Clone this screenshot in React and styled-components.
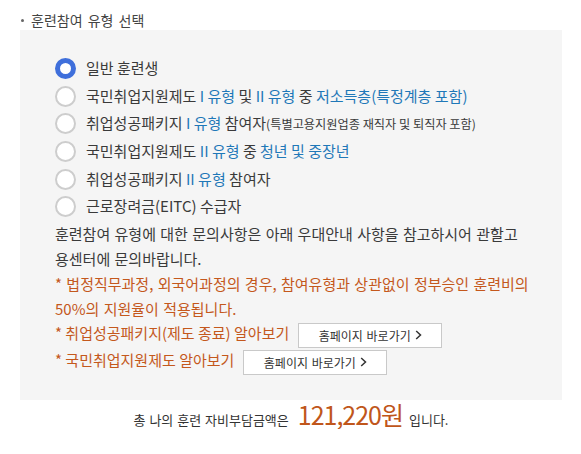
import React, { useState } from "react";
import styled, { createGlobalStyle } from "styled-components";

const Global = createGlobalStyle`
  html, body { margin: 0; padding: 0; background: #fff; }
  body { font-family: "Noto Sans CJK KR", "Noto Sans", sans-serif; color: #3a3a3a; }
`;

const Page = styled.div`
  width: 581px;
  padding: 0 19px 0 20px;
  box-sizing: border-box;
`;

const Title = styled.div`
  display: flex;
  align-items: center;
  gap: 7px;
  height: 30px;
  padding-top: 10px;
  box-sizing: border-box;
  font-size: 14px;
  letter-spacing: 0;
  word-spacing: 2px;
  color: #444;
  line-height: 1;
`;

const Dot = styled.span`
  width: 3px;
  height: 3px;
  border-radius: 50%;
  background: #666;
  margin-left: 1px;
`;

const Panel = styled.div`
  background: #f5f5f5;
  padding: 25px 20px 24px 35px;
  display: flex;
  flex-direction: column;
`;

const RadioRow = styled.label`
  display: flex;
  align-items: center;
  gap: 10px;
  height: 27.6px;
  font-size: 15px;
  letter-spacing: 0;
  word-spacing: 0;
  color: #3a3a3a;
  cursor: pointer;
  white-space: nowrap;
`;

const Label = styled.span`
  padding-bottom: 2px;
`;

const Circle = styled.span`
  width: 21px;
  height: 21px;
  border-radius: 50%;
  box-sizing: border-box;
  flex: none;
  background: #fff;
  border: ${(p) => (p.$on ? "5.5px solid #3f6fdb" : "2.5px solid #cdcdcd")};
`;

const Blue = styled.span`
  color: #1f78b8;
`;

const Small = styled.span`
  font-size: 12.2px;
  letter-spacing: 0;
  word-spacing: 0;
`;

const Text = styled.p`
  margin: 0;
  font-size: 15px;
  line-height: 25.3px;
  letter-spacing: 0;
  word-spacing: 1px;
  white-space: nowrap;
  color: ${(p) => (p.$orange ? "#c4581c" : "#3a3a3a")};
`;

const LinkRow = styled.div`
  display: flex;
  align-items: center;
  gap: 9px;
  height: 27px;
  font-size: 15px;
  letter-spacing: 0;
  word-spacing: 0;
  color: #c4581c;
  white-space: nowrap;
`;

const LinkLabel = styled.span`
  padding-bottom: 6px;
`;

const Button = styled.button`
  width: 144px;
  height: 25px;
  background: #fff;
  border: 1px solid #c9c9c9;
  font-family: inherit;
  font-size: 12px;
  letter-spacing: 0;
  word-spacing: 1px;
  color: #333;
  display: flex;
  align-items: center;
  justify-content: center;
  gap: 4px;
  padding: 0;
  cursor: pointer;
`;

const Chev = styled.svg`
  width: 7px;
  height: 10px;
`;

const Total = styled.div`
  display: flex;
  justify-content: center;
  align-items: baseline;
  font-size: 13px;
  letter-spacing: 0;
  word-spacing: 1px;
  color: #333;
`;

const Amount = styled.span`
  font-size: 25px;
  letter-spacing: -1px;
  color: #c0561b;
  line-height: 28px;
  margin: 0 6px 0 9px;
`;

const options = [
  <>일반 훈련생</>,
  <>
    국민취업지원제도 <Blue>I 유형</Blue> 및 <Blue>II 유형</Blue> 중 <Blue>저소득층(특정계층 포함)</Blue>
  </>,
  <>
    취업성공패키지 <Blue>I 유형</Blue> 참여자<Small>(특별고용지원업종 재직자 및 퇴직자 포함)</Small>
  </>,
  <>
    국민취업지원제도 <Blue>II 유형</Blue> 중 <Blue>청년 및 중장년</Blue>
  </>,
  <>
    취업성공패키지 <Blue>II 유형</Blue> 참여자
  </>,
  <>근로장려금(EITC) 수급자</>,
];

function Arrow() {
  return (
    <Chev viewBox="0 0 7 10">
      <path d="M1.2 1 L5.5 5 L1.2 9" fill="none" stroke="#333" strokeWidth="1.5" />
    </Chev>
  );
}

export default function App() {
  const [sel, setSel] = useState(0);
  return (
    <Page>
      <Global />
      <Title>
        <Dot />
        훈련참여 유형 선택
      </Title>
      <Panel>
        {options.map((o, i) => (
          <RadioRow key={i} onClick={() => setSel(i)}>
            <Circle $on={sel === i} />
            <Label>{o}</Label>
          </RadioRow>
        ))}
        <Text>
          훈련참여 유형에 대한 문의사항은 아래 우대안내 사항을 참고하시어 관할고
          <br />
          용센터에 문의바랍니다.
        </Text>
        <Text $orange>
          * 법정직무과정, 외국어과정의 경우, 참여유형과 상관없이 정부승인 훈련비의
          <br />
          50%의 지원율이 적용됩니다.
        </Text>
        <LinkRow>
          <LinkLabel>* 취업성공패키지(제도 종료) 알아보기</LinkLabel>
          <Button>
            홈페이지 바로가기 <Arrow />
          </Button>
        </LinkRow>
        <LinkRow>
          <LinkLabel>* 국민취업지원제도 알아보기</LinkLabel>
          <Button>
            홈페이지 바로가기 <Arrow />
          </Button>
        </LinkRow>
      </Panel>
      <Total>
        <span>총 나의 훈련 자비부담금액은</span>
        <Amount>121,220원</Amount>
        <span>입니다.</span>
      </Total>
    </Page>
  );
}
